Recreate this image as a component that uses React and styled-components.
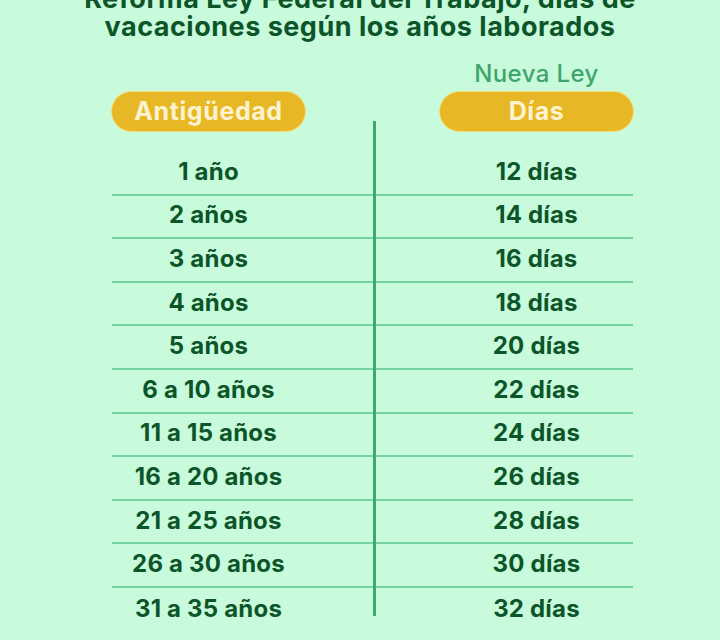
import React from "react";
import styled, { createGlobalStyle } from "styled-components";

const GlobalStyle = createGlobalStyle`
  html, body { margin: 0; padding: 0; background: #c8fadc; }
  * { box-sizing: border-box; }
`;

const Page = styled.div`
  width: 720px;
  height: 640px;
  overflow: hidden;
  background: #c8fadc;
  font-family: Inter, "Liberation Sans", sans-serif;
  color: #0c5529;
`;

const Title = styled.h1`
  margin: -15px 0 0;
  font-size: 27px;
  line-height: 28px;
  font-weight: 700;
  text-align: center;
  letter-spacing: 0.5px;
  color: #0c5529;
`;

const Table = styled.div`
  display: flex;
  flex-direction: column;
  margin: 19px 0 0 112px;
  width: 521px;
`;

const Row = styled.div`
  display: grid;
  grid-template-columns: 261px 3px 257px;
  height: ${(p) => (p.$header ? "92px" : "43.6px")};
`;

const Half = styled.div`
  display: flex;
  align-items: center;
  justify-content: center;
  padding: ${(p) => (p.$side === "left" ? "0 68px 3px 0" : "0 0 3px 64px")};
  border-bottom: ${(p) => (p.$last ? "none" : "2px solid #74d39e")};
  font-size: 24px;
  font-weight: 700;
  letter-spacing: 0.2px;
  color: #0c5529;
`;

const HeadCell = styled.div`
  display: flex;
  flex-direction: column;
  align-items: ${(p) => (p.$side === "left" ? "flex-start" : "flex-end")};
  justify-content: flex-end;
  padding-bottom: 21px;
`;

const HeadStack = styled.div`
  display: flex;
  flex-direction: column;
  align-items: center;
  width: 193px;
`;

const NuevaLey = styled.div`
  font-size: 24px;
  line-height: 26px;
  font-weight: 500;
  letter-spacing: 0.4px;
  color: #3fa56a;
  margin-bottom: 5px;
`;

const Pill = styled.div`
  width: 193px;
  height: 39px;
  border-radius: 20px;
  background: #e8b725;
  box-shadow: 0 0 0 1px #f2dd7a;
  color: #fdf4cf;
  font-size: 25px;
  font-weight: 700;
  letter-spacing: 0.6px;
  display: flex;
  align-items: center;
  justify-content: center;
  padding-bottom: 1px;
`;

const Divider = styled.div`
  width: 3px;
  background: #41a86a;
  align-self: ${(p) => (p.$part === "top" ? "end" : p.$part === "bottom" ? "start" : "stretch")};
  height: ${(p) => (p.$part === "top" ? "31px" : p.$part === "bottom" ? "28px" : "auto")};
`;

const rows = [
  ["1 año", "12 días"],
  ["2 años", "14 días"],
  ["3 años", "16 días"],
  ["4 años", "18 días"],
  ["5 años", "20 días"],
  ["6 a 10 años", "22 días"],
  ["11 a 15 años", "24 días"],
  ["16 a 20 años", "26 días"],
  ["21 a 25 años", "28 días"],
  ["26 a 30 años", "30 días"],
  ["31 a 35 años", "32 días"],
];

export default function App() {
  return (
    <Page>
      <GlobalStyle />
      <Title>
        Reforma Ley Federal del Trabajo, días de
        <br />
        vacaciones según los años laborados
      </Title>
      <Table>
        <Row $header>
          <HeadCell $side="left">
            <Pill>Antigüedad</Pill>
          </HeadCell>
          <Divider $part="top" />
          <HeadCell $side="right">
            <HeadStack>
              <NuevaLey>Nueva Ley</NuevaLey>
              <Pill>Días</Pill>
            </HeadStack>
          </HeadCell>
        </Row>
        {rows.map(([a, d], i) => {
          const last = i === rows.length - 1;
          return (
            <Row key={a}>
              <Half $side="left" $last={last}>{a}</Half>
              <Divider $part={last ? "bottom" : "full"} />
              <Half $side="right" $last={last}>{d}</Half>
            </Row>
          );
        })}
      </Table>
    </Page>
  );
}
